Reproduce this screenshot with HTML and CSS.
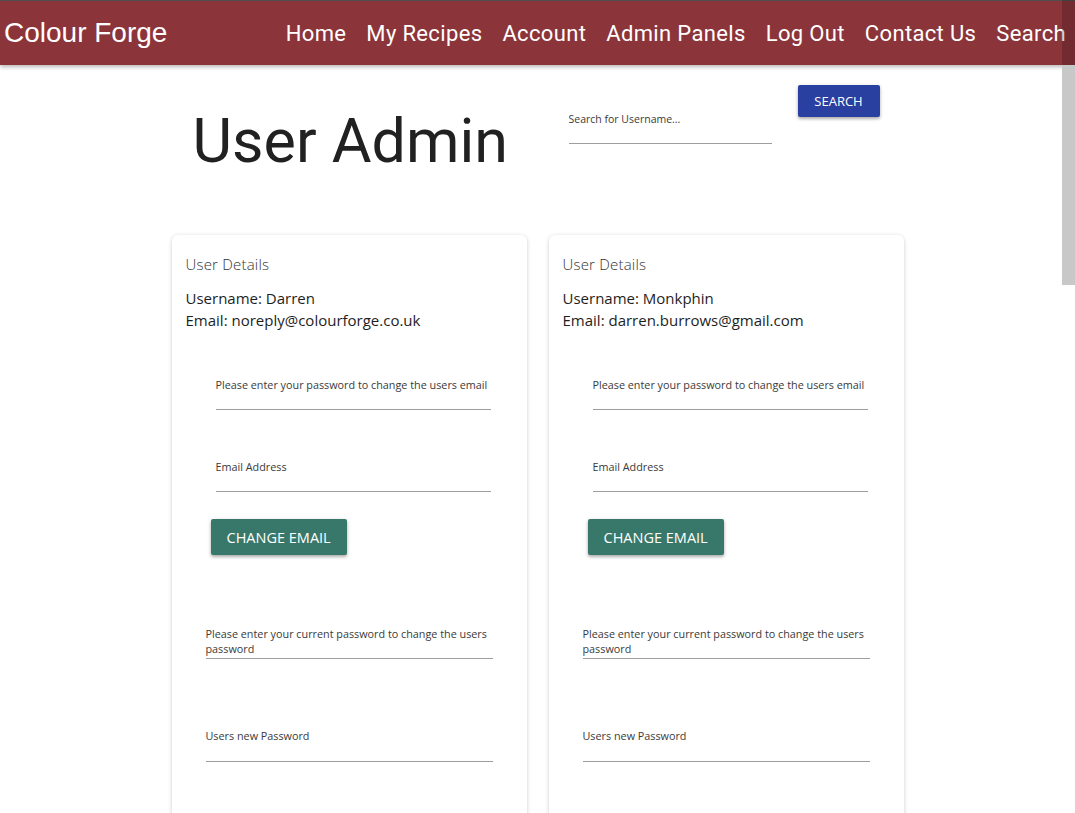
FILE: index.html
```html
<!DOCTYPE html>
<html lang="en">
<head>
<meta charset="utf-8">
<title>User Admin - Colour Forge</title>
<link rel="stylesheet" href="styles.css">
</head>
<body>
<nav class="navbar">
  <a class="brand" href="#">Colour Forge</a>
  <ul class="nav-links">
    <li><a href="#">Home</a></li>
    <li><a href="#">My Recipes</a></li>
    <li><a href="#">Account</a></li>
    <li><a href="#">Admin Panels</a></li>
    <li><a href="#">Log Out</a></li>
    <li><a href="#">Contact Us</a></li>
    <li><a href="#">Search</a></li>
  </ul>
</nav>

<main class="container">
  <header class="page-header">
    <h1 class="page-title">User Admin</h1>
    <form class="search-form">
      <div class="field search-field">
        <label class="field-label">Search for Username...</label>
        <input class="field-input" type="text">
      </div>
      <button class="btn btn-blue" type="button">SEARCH</button>
    </form>
  </header>

  <section class="cards">
    <article class="card">
      <div class="card-title">User Details</div>
      <div class="card-info">
        <p>Username: Darren</p>
        <p>Email: noreply@colourforge.co.uk</p>
      </div>
      <form class="form-email">
        <div class="field">
          <label class="field-label">Please enter your password to change the users email</label>
          <input class="field-input" type="password">
        </div>
        <div class="field field-second">
          <label class="field-label">Email Address</label>
          <input class="field-input" type="email">
        </div>
        <button class="btn btn-green" type="button">CHANGE EMAIL</button>
      </form>
      <form class="form-password">
        <div class="field">
          <label class="field-label">Please enter your current password to change the users password</label>
          <input class="field-input thin" type="password">
        </div>
        <div class="field field-new">
          <label class="field-label">Users new Password</label>
          <input class="field-input" type="password">
        </div>
      </form>
    </article>

    <article class="card">
      <div class="card-title">User Details</div>
      <div class="card-info">
        <p>Username: Monkphin</p>
        <p>Email: darren.burrows@gmail.com</p>
      </div>
      <form class="form-email">
        <div class="field">
          <label class="field-label">Please enter your password to change the users email</label>
          <input class="field-input" type="password">
        </div>
        <div class="field field-second">
          <label class="field-label">Email Address</label>
          <input class="field-input" type="email">
        </div>
        <button class="btn btn-green" type="button">CHANGE EMAIL</button>
      </form>
      <form class="form-password">
        <div class="field">
          <label class="field-label">Please enter your current password to change the users password</label>
          <input class="field-input thin" type="password">
        </div>
        <div class="field field-new">
          <label class="field-label">Users new Password</label>
          <input class="field-input" type="password">
        </div>
      </form>
    </article>
  </section>
</main>

<div class="scroll-track-top"></div>
<div class="scroll-thumb"></div>
</body>
</html>
```

FILE: styles.css
```css
html {
  overflow: hidden;
}

body {
  margin: 0;
  background: #ffffff;
  font-family: "Open Sans", "Noto Sans", sans-serif;
  color: #222222;
}

/* ---------- Navbar ---------- */
.navbar {
  height: 64px;
  border-top: 1px solid #505050;
  background: #8b353b;
  display: flex;
  align-items: center;
  justify-content: space-between;
  box-shadow: 0 2px 4px rgba(0, 0, 0, 0.28);
  position: relative;
  z-index: 2;
}

.brand {
  padding-left: 4px;
  font-family: "Liberation Sans", Arial, sans-serif;
  font-size: 28px;
  color: #ffffff;
  text-decoration: none;
}

.nav-links {
  list-style: none;
  margin: 0;
  padding: 0 9px 0 0;
  display: flex;
  gap: 20px;
}

.nav-links a {
  font-family: Roboto, "Liberation Sans", sans-serif;
  font-size: 22px;
  letter-spacing: 0.35px;
  color: #ffffff;
  text-decoration: none;
}

/* ---------- Page ---------- */
.container {
  width: 732px;
  margin: 0 auto;
}

.page-header {
  display: flex;
  align-items: flex-start;
  padding-top: 20px;
}

.page-title {
  width: 397px;
  box-sizing: border-box;
  margin: 20px 0 0;
  padding-left: 21px;
  font-family: Roboto, sans-serif;
  font-weight: 400;
  font-size: 61px;
  line-height: normal;
  color: #212121;
}

.search-form {
  display: flex;
  align-items: flex-start;
  gap: 26px;
}

.search-field {
  width: 203px;
  margin-top: 28px;
}

/* ---------- Fields ---------- */
.field {
  display: flex;
  flex-direction: column;
}

.field-label {
  font-size: 10.8px;
  line-height: 12px;
  color: #3a3a3a;
}

.search-field .field-label {
  font-size: 10.5px;
}

.field-input {
  height: 18px;
  padding: 0;
  border: none;
  border-bottom: 1px solid #9e9e9e;
  background: transparent;
  outline: none;
}

.field-input.thin {
  height: 2px;
}

/* ---------- Buttons ---------- */
.btn {
  border: none;
  border-radius: 2px;
  color: #ffffff;
  font-family: "Open Sans", sans-serif;
  cursor: pointer;
  box-shadow: 0 2px 3px rgba(0, 0, 0, 0.25), 0 1px 5px rgba(0, 0, 0, 0.12);
}

.btn-blue {
  width: 82px;
  height: 32px;
  background: #2a40a0;
  font-size: 13px;
}

.btn-green {
  align-self: flex-start;
  height: 36px;
  padding: 0 16px;
  background: #38786a;
  font-size: 14.5px;
}

/* ---------- Cards ---------- */
.cards {
  margin-top: 58px;
  display: grid;
  grid-template-columns: 355px 355px;
  gap: 22px;
}

.card {
  min-height: 640px;
  padding: 18px 14px 0;
  border-radius: 6px;
  background: #ffffff;
  box-shadow: 0 1px 4px rgba(0, 0, 0, 0.2);
}

.card-title {
  font-size: 15px;
  font-weight: 300;
  letter-spacing: 0.2px;
  line-height: 22px;
  color: #333333;
}

.card-info {
  margin-top: 12px;
}

.card-info p {
  margin: 0;
  font-size: 15px;
  line-height: 22px;
  color: #1e1e1e;
}

.form-email {
  margin: 48px 22px 0 30px;
  display: flex;
  flex-direction: column;
}

.form-email .field-label {
  white-space: nowrap;
}

.field-second {
  margin-top: 51px;
}

.form-email .btn-green {
  margin: 27px 0 0 -5px;
}

.form-password {
  margin: 71px 20px 0 20px;
  display: flex;
  flex-direction: column;
}

.form-password .field-label {
  line-height: 15px;
}

.field-new {
  margin-top: 69px;
}

/* ---------- Scrollbar overlay ---------- */
.scroll-track-top {
  position: fixed;
  top: 0;
  right: 0;
  width: 13px;
  height: 65px;
  background: rgba(0, 0, 0, 0.18);
  z-index: 5;
}

.scroll-thumb {
  position: fixed;
  top: 65px;
  right: 0;
  width: 13px;
  height: 220px;
  background: #c8c8c8;
  z-index: 5;
}
```
